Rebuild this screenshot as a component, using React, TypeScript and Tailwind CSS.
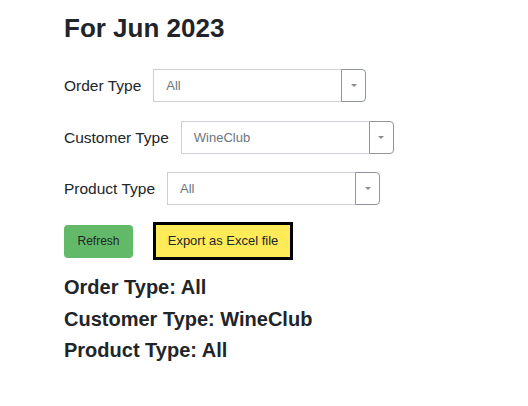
import React from "react";

function Select({ value }: { value: string }) {
  return (
    <div className="flex w-[213px] h-[33px]">
      <div className="flex-1 flex items-center border border-[#ccd0d5] border-r-0 pl-3 text-[13px] text-[#6c757d]">
        {value}
      </div>
      <div className="w-[25px] flex items-center justify-center border border-[#8f959b] rounded-r-[4px]">
        <div className="w-0 h-0 border-l-[3px] border-r-[3px] border-t-[3px] border-l-transparent border-r-transparent border-t-[#8a8a8a]" />
      </div>
    </div>
  );
}

function Row({ label, value, className }: { label: string; value: string; className?: string }) {
  return (
    <div className={"flex items-center gap-[12px] " + (className ?? "")}>
      <span className="text-[15.5px] text-[#212529]">{label}</span>
      <Select value={value} />
    </div>
  );
}

export default function App() {
  return (
    <div
      className="w-[528px] h-[406px] bg-white pl-[64px] pt-[13px]"
      style={{ fontFamily: '"Liberation Sans", Arial, sans-serif' }}
    >
      <h1 className="text-[26px] leading-[30px] font-bold text-[#212529]">For Jun 2023</h1>
      <Row label="Order Type" value="All" className="mt-[26px]" />
      <Row label="Customer Type" value="WineClub" className="mt-[19px]" />
      <Row label="Product Type" value="All" className="mt-[18px]" />
      <div className="flex items-center gap-[20px] mt-[17px]">
        <button className="w-[69px] h-[33px] rounded-[4px] bg-[#62ba69] text-[12px] text-[#212529] flex items-center justify-center">
          Refresh
        </button>
        <button className="w-[140px] h-[38px] border-[3px] border-black bg-[#ffeb57] text-[13px] text-[#212529] flex items-center justify-center">
          Export as Excel file
        </button>
      </div>
      <div className="mt-[12px] flex flex-col text-[20px] leading-[31.5px] font-bold text-[#212529]">
        <div>Order Type: All</div>
        <div>Customer Type: WineClub</div>
        <div>Product Type: All</div>
      </div>
    </div>
  );
}
